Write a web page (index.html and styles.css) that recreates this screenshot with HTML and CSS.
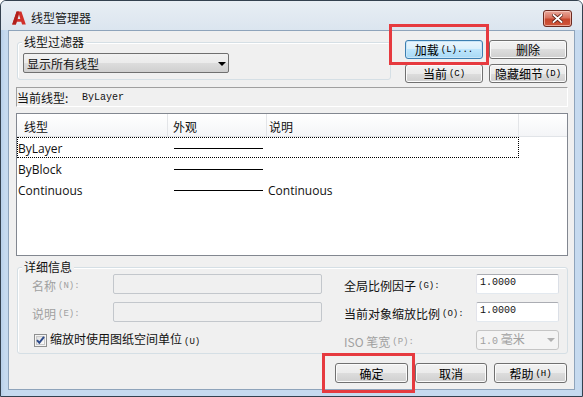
FILE: index.html
```html
<!DOCTYPE html>
<html lang="zh-CN">
<head>
<meta charset="utf-8">
<title>线型管理器</title>
<link rel="stylesheet" href="styles.css">
</head>
<body>
<div class="window">
  <div class="titlebar">
    <svg class="app-icon" width="14" height="14" viewBox="0 0 14 14">
      <path d="M4.6 0.5 H9.4 L13.8 13.5 H10.1 L9.2 10.8 H4.8 L3.9 13.5 H0.2 Z M7 3.6 L5.7 8 H8.3 Z" fill="#d1302b" fill-rule="evenodd"/>
      <path d="M4.6 0.5 H7 L3.9 13.5 H0.2 Z" fill="#b0201c"/>
    </svg>
    <span class="title">线型管理器</span>
    <div class="close">
      <svg width="11" height="9" viewBox="0 0 11 9">
        <path d="M1.5 1 L9.5 8 M9.5 1 L1.5 8" stroke="#5a1d14" stroke-width="3.4" stroke-linecap="square"/>
        <path d="M1.5 1 L9.5 8 M9.5 1 L1.5 8" stroke="#ffffff" stroke-width="1.8" stroke-linecap="square"/>
      </svg>
    </div>
  </div>

  <div class="client">
    <div class="top-row">
      <div class="group filter">
        <div class="group-title">线型过滤器</div>
        <div class="select">
          <span>显示所有线型</span>
          <span class="arrow"></span>
        </div>
      </div>
      <div class="btn-grid">
        <div class="btn default">加载<span class="key">(L)...</span></div>
        <div class="btn">删除</div>
        <div class="btn">当前<span class="key">(C)</span></div>
        <div class="btn">隐藏细节<span class="key">(D)</span></div>
      </div>
    </div>

    <div class="current-line">
      <span class="cl-label">当前线型:</span>
      <span class="mono">ByLayer</span>
    </div>

    <div class="list">
      <div class="list-head">
        <div class="hcell c1">线型</div>
        <div class="hcell c2">外观</div>
        <div class="hcell c3">说明</div>
        <div class="hcell c4"></div>
      </div>
      <div class="list-row focused">
        <div class="cell c1">ByLayer</div>
        <div class="cell c2"><span class="sample"></span></div>
        <div class="cell c3"></div>
      </div>
      <div class="list-row">
        <div class="cell c1">ByBlock</div>
        <div class="cell c2"><span class="sample"></span></div>
        <div class="cell c3"></div>
      </div>
      <div class="list-row">
        <div class="cell c1">Continuous</div>
        <div class="cell c2"><span class="sample"></span></div>
        <div class="cell c3">Continuous</div>
      </div>
    </div>

    <div class="group details">
      <div class="group-title">详细信息</div>
      <div class="detail-grid">
        <div class="lbl disabled">名称<span class="key">(N):</span></div>
        <div class="tb off"></div>
        <div class="lbl">全局比例因子<span class="key">(G):</span></div>
        <div class="tb">1.0000</div>

        <div class="lbl disabled">说明<span class="key">(E):</span></div>
        <div class="tb off"></div>
        <div class="lbl">当前对象缩放比例<span class="key">(O):</span></div>
        <div class="tb">1.0000</div>

        <div class="check-row">
          <svg class="checkbox" width="13" height="13" viewBox="0 0 13 13">
            <defs>
              <linearGradient id="cbg" x1="0" y1="0" x2="1" y2="1">
                <stop offset="0" stop-color="#dcdcdc"/>
                <stop offset="1" stop-color="#ffffff"/>
              </linearGradient>
            </defs>
            <rect x="0.5" y="0.5" width="12" height="12" fill="#f4f4f4" stroke="#8e8f8f"/>
            <rect x="2.5" y="2.5" width="8" height="8" fill="url(#cbg)" stroke="#c8c8c8"/>
            <path d="M3 6.2 L5.3 8.8 L10 2.8" fill="none" stroke="#2d4a8a" stroke-width="2"/>
          </svg>
          <span>缩放时使用图纸空间单位<span class="key">(U)</span></span>
        </div>
        <div class="lbl disabled">ISO 笔宽<span class="key">(P):</span></div>
        <div class="combo off"><span><span class="mono">1.0</span> 毫米</span><span class="arrow small"></span></div>
      </div>
    </div>

    <div class="footer">
      <div class="btn w73">确定</div>
      <div class="btn w72">取消</div>
      <div class="btn w73">帮助<span class="key">(H)</span></div>
    </div>
  </div>

  <div class="mark mark-load"></div>
  <div class="mark mark-ok"></div>
</div>
</body>
</html>
```

FILE: styles.css
```css
* { box-sizing: border-box; }
html, body { margin: 0; padding: 0; }
body {
  width: 583px;
  height: 397px;
  overflow: hidden;
  background: #ffffff;
  font-family: "Noto Sans CJK SC", "Open Sans", sans-serif;
  font-size: 12px;
  line-height: 12px;
  color: #111;
}

.window {
  position: relative;
  width: 583px;
  height: 397px;
  border: 1px solid #34414f;
  border-radius: 6px 6px 0 0;
  background: linear-gradient(90deg, #b8d0ea 0, #c6daef 4px, #c6daef 579px, #b8d0ea 100%);
  padding: 0 7px 6px 7px;
  display: flex;
  flex-direction: column;
}

.titlebar {
  height: 29px;
  margin: 0 -7px;
  padding: 5px 10px 0 11px;
  display: flex;
  align-items: center;
  border-radius: 5px 5px 0 0;
  background: linear-gradient(#e8eef4, #dbe5ef);
}
.app-icon { flex: none; }
.title {
  margin-left: 5px;
  font-size: 12px;
  color: #1a1a1a;
}
.close {
  margin-left: auto;
  width: 29px;
  height: 17px;
  border: 1px solid #6b2a20;
  border-radius: 3px;
  background: linear-gradient(#e9a89c 0, #d9735f 45%, #c7462c 55%, #d0573c 100%);
  box-shadow: inset 0 0 0 1px rgba(255, 220, 210, 0.6);
  display: flex;
  align-items: center;
  justify-content: center;
}

.client {
  flex: 1;
  background: #f0f0f0;
  border: 1px solid #8fa4bb;
  display: flex;
  flex-direction: column;
}

/* group boxes */
.group {
  border: 1px solid #d5dfe5;
  border-radius: 3px;
  box-shadow: inset 1px 1px 0 #ffffff;
}
.group-title {
  width: max-content;
  margin: -7px 0 0 4px;
  padding: 0 2px;
  height: 12px;
  line-height: 12px;
  background: #f0f0f0;
}

.top-row {
  display: flex;
  align-items: flex-start;
  padding-left: 8px;
}
.filter {
  width: 374px;
  margin-top: 11px;
  padding: 0 0 6px 0;
}
.select {
  margin: 5px 0 0 5px;
  width: 206px;
  height: 20px;
  border: 1px solid #707070;
  border-radius: 2px;
  background: linear-gradient(#f2f2f2 0, #ebebeb 50%, #dddddd 50%, #cfcfcf 100%);
  display: flex;
  align-items: center;
  padding: 1px 2px 0 3px;
}
.arrow {
  margin-left: auto;
  width: 0;
  height: 0;
  border-left: 4px solid transparent;
  border-right: 4px solid transparent;
  border-top: 4px solid #000;
}
.arrow.small {
  border-top: 4px solid #b0b0b0;
  margin-right: 3px;
}

.btn-grid {
  margin: 9px 0 0 14px;
  display: grid;
  grid-template-columns: 78px 78px;
  grid-auto-rows: 19px;
  column-gap: 6px;
  row-gap: 5px;
}
.btn {
  height: 100%;
  border: 1px solid #707070;
  border-radius: 3px;
  background: linear-gradient(#f2f2f2 0, #ebebeb 50%, #dddddd 50%, #cfcfcf 100%);
  box-shadow: inset 0 0 0 1px #fbfbfb;
  display: flex;
  align-items: center;
  justify-content: center;
  padding-top: 1px;
  color: #000;
}
.btn.default {
  border-color: #3c7fb1;
  background: linear-gradient(#eaf6fd 0, #d9f0fc 50%, #bee6fd 50%, #a7d9f5 100%);
  box-shadow: inset 0 0 0 1px #c9e6f8;
}
.key {
  font-family: "Liberation Mono", monospace;
  font-size: 9px;
  margin-left: 2px;
}
.mono {
  font-family: "Liberation Mono", monospace;
  font-size: 10px;
}

.current-line {
  margin: 4px 6px 0 7px;
  height: 20px;
  border: 1px solid;
  border-color: #a0a0a0 #ffffff #ffffff #a0a0a0;
  display: flex;
  align-items: center;
  padding-top: 1px;
}
.cl-label { width: 65px; }

/* list */
.list {
  margin: 6px 6px 0 7px;
  height: 143px;
  border: 1px solid #828790;
  background: #ffffff;
}
.list-head {
  display: grid;
  grid-template-columns: 151px 99px 252px 1fr;
  height: 23px;
  border-bottom: 1px solid #e1e4e8;
  background: linear-gradient(#ffffff, #f4f5f7);
}
.hcell {
  border-right: 1px solid #e3e5e8;
  display: flex;
  align-items: center;
  padding-top: 3px;
}
.hcell.c1 { padding-left: 7px; }
.hcell.c2 { padding-left: 5px; }
.hcell.c3 { padding-left: 2px; }
.hcell.c4 { border-right: none; }

.list-row {
  width: 502px;
  height: 21px;
  display: grid;
  grid-template-columns: 151px 99px 252px;
  font-family: "Open Sans", "Noto Sans CJK SC", sans-serif;
  font-size: 12px;
}
.list-row.focused {
  outline: 1px dotted #000;
  outline-offset: -1px;
}
.cell {
  display: flex;
  align-items: center;
  padding-top: 2px;
}
.cell.c1 { padding-left: 1px; }
.cell.c2 { padding-left: 6px; padding-top: 1px; }
.cell.c3 { padding-left: 1px; }
.sample {
  display: block;
  width: 89px;
  height: 1px;
  background: #000;
}

/* details */
.details {
  margin: 11px 6px 0 8px;
  padding: 0 0 3px 0;
}
.detail-grid {
  margin-top: 1px;
  padding: 0 8px 0 14px;
  display: grid;
  grid-template-columns: 81px 209px 154px 83px;
  grid-template-rows: 20px 20px 20px;
  row-gap: 8px;
}
.detail-grid > :nth-child(3),
.detail-grid > :nth-child(7),
.detail-grid > :nth-child(10) { margin-left: 22px; }
.lbl {
  display: flex;
  align-items: center;
  padding-top: 3px;
}
.lbl.disabled { color: #a0a0a0; }
.tb {
  height: 20px;
  border: 1px solid;
  border-color: #abadb3 #dbdfe6 #e3e9ef #e2e3ea;
  border-radius: 2px;
  background: #ffffff;
  font-family: "Liberation Mono", monospace;
  font-size: 10px;
  display: flex;
  align-items: center;
  padding: 0 0 3px 3px;
}
.tb.off {
  background: #f0f0f0;
  border-color: #c3c7cc;
}
.check-row {
  grid-column: 1 / span 2;
  display: flex;
  align-items: center;
  padding-left: 2px;
  padding-top: 1px;
}
.checkbox { flex: none; margin-right: 3px; }
.combo {
  height: 20px;
  border: 1px solid #c5c5c5;
  border-radius: 3px;
  background: #f4f4f4;
  color: #a0a0a0;
  display: flex;
  align-items: center;
  padding-left: 3px;
}

/* footer */
.footer {
  margin-top: 9px;
  height: 20px;
  display: flex;
  justify-content: flex-end;
  gap: 7px;
  padding-right: 7px;
}
.w73 { width: 73px; }
.w72 { width: 72px; }

/* red annotation rectangles */
.mark {
  position: absolute;
  border: 3px solid #e63a3f;
}
.mark-load { left: 388px; top: 23px; width: 100px; height: 41px; }
.mark-ok { left: 321px; top: 352px; width: 93px; height: 40px; }
```
